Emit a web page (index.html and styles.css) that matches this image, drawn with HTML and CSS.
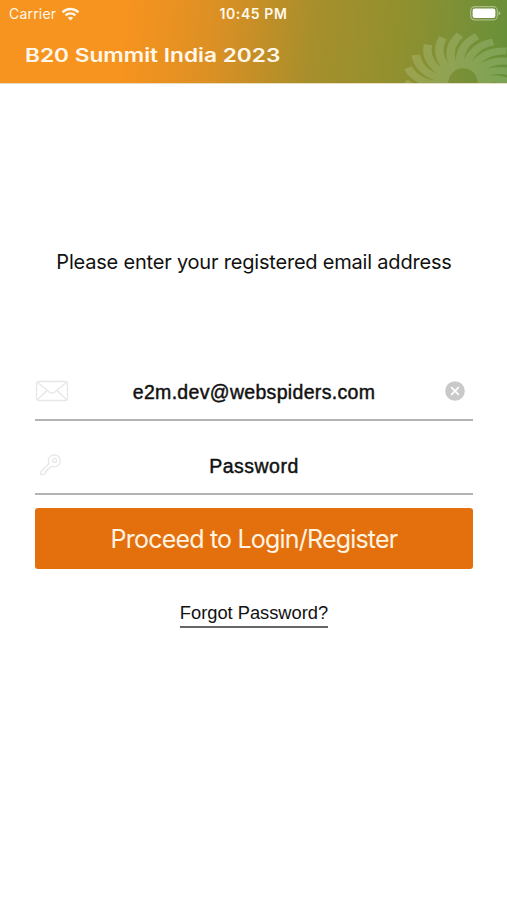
FILE: index.html
```
<!DOCTYPE html>
<html lang="en">
<head>
<meta charset="utf-8">
<title>B20 Summit India 2023</title>
<link rel="stylesheet" href="styles.css">
</head>
<body>
<header class="header">
  <svg class="flower" width="110" height="56" viewBox="0 0 110 56">
    <g id="petals" transform="translate(66 56) scale(1 .83)">
      <ellipse rx="19" ry="22"/>
    </g>
  </svg>
  <div class="status-bar">
    <div class="carrier">
      <span>Carrier</span>
      <svg width="19" height="14" viewBox="0 0 18 14" fill="none" stroke="#fff8ea" stroke-width="2.4">
        <path d="M1 5.3C5.5 .9 12.5 .9 17 5.3"/>
        <path d="M4 8.4C6.8 5.7 11.2 5.7 14 8.4"/>
        <path d="M6.3 10.7C7.9 9.3 10.1 9.3 11.7 10.7L9 13.4Z" fill="#fff8ea" stroke="none"/>
      </svg>
    </div>
    <div class="time">10:45 PM</div>
    <svg class="battery" width="31" height="15" viewBox="0 0 31 15">
      <rect x=".7" y=".7" width="26.6" height="13.2" rx="4" fill="none" stroke="#fff" stroke-opacity=".4" stroke-width="1.2"/>
      <rect x="2.6" y="2.6" width="22.8" height="9.4" rx="2.2" fill="#fff"/>
      <path d="M28.6 5V9.6Q30.2 8.8 30.2 7.3T28.6 5Z" fill="#fff" fill-opacity=".5"/>
    </svg>
  </div>
  <h1 class="title">B20 Summit India 2023</h1>
</header>

<main class="login">
  <p class="hint">Please enter your registered email address</p>

  <div class="field">
    <svg class="icon" width="34" height="22" viewBox="0 0 34 22" fill="none" stroke="#e6e8e8" stroke-width="1.3">
      <rect x="1.5" y="1.5" width="31" height="19" rx="2"/>
      <path d="M2 2L14.5 12.3Q17 14.2 19.5 12.3L32 2M2 20L12 10.5M32 20L22 10.5"/>
    </svg>
    <span class="value email">e2m.dev@webspiders.com</span>
    <svg class="icon clear" width="20" height="20" viewBox="0 0 20 20">
      <circle cx="10" cy="10" r="9.8" fill="#c9c9c9"/>
      <path d="M6.2 6.2L13.8 13.8M13.8 6.2L6.2 13.8" stroke="#fff" stroke-width="1.7"/>
    </svg>
  </div>

  <div class="field">
    <svg class="icon key" width="22" height="22" viewBox="0 0 22 22" fill="none" stroke="#e6e6e6" stroke-width="1.2">
      <path d="M10 9.6A6 6 0 1 1 12.7 12.2L10.7 14.2L9 14.4L8.8 16.4L6.8 16.8L6.6 18.8L5 20.4L1.5 20.7L1.8 17.6Z"/>
      <circle cx="15.6" cy="6.4" r="2"/>
    </svg>
    <span class="value password">Password</span>
  </div>

  <button class="proceed">Proceed to Login/Register</button>
  <a class="forgot">Forgot Password?</a>
</main>

<script>
const petals = document.getElementById("petals");
for (let i = 0; i < 21; i++) {
  const petal = document.createElementNS("http://www.w3.org/2000/svg", "path");
  petal.setAttribute("d", "M-9 -19Q-18 -42 -3 -58");
  petal.setAttribute("transform", `rotate(${i * 360 / 21})`);
  petals.appendChild(petal);
}
</script>
</body>
</html>
```
FILE: styles.css
```
body {
  margin: 0;
  width: 507px;
  height: 900px;
  overflow: hidden;
  background: #fff;
  color: #111;
  font-family: Inter, "Liberation Sans", sans-serif;
}
.header {
  position: relative;
  height: 83px;
  overflow: hidden;
  border-bottom: 1px solid #e9dcc0;
  background: linear-gradient(96deg, #f7931f 0%, #f7931f 25%, #dc9024 42%, #c18f27 52%, #a58f2c 62%, #93902e 77%, #7b9037 90%, #669038 100%);
  color: #fff8ea;
}
.flower {
  position: absolute;
  right: 0;
  bottom: 0;
  opacity: .17;
}
#petals {
  fill: none;
  stroke: #e6ffe0;
  stroke-width: 8.5;
}
.status-bar {
  position: relative;
  display: grid;
  grid-template-columns: 1fr auto 1fr;
  align-items: center;
  height: 27px;
  padding: 0 6px 0 9px;
  font-size: 14px;
}
.carrier {
  display: flex;
  align-items: center;
  gap: 5px;
  letter-spacing: .2px;
}
.time {
  margin-right: 3px;
  font-weight: 600;
  letter-spacing: .6px;
}
.battery {
  justify-self: end;
}
.title {
  position: relative;
  width: max-content;
  margin: 16px 0 0 25px;
  font-size: 18.5px;
  line-height: 24px;
  font-weight: 600;
  transform: scaleX(1.225);
  transform-origin: left;
}
.login {
  display: flex;
  flex-direction: column;
  padding: 0 34px 0 35px;
}
.hint {
  margin: 165px 0 88px;
  line-height: 26px;
  font-size: 20px;
  letter-spacing: -.2px;
  text-align: center;
  white-space: nowrap;
}
.field {
  display: grid;
  grid-template-columns: 34px 1fr 34px;
  align-items: center;
  box-sizing: border-box;
  height: 58px;
  margin-bottom: 16px;
  border-bottom: 2px solid #b4b4b4;
}
.field + .field {
  margin-bottom: 13px;
}
.value {
  padding-top: 2px;
  text-align: center;
  font-family: "Liberation Sans", sans-serif;
  font-size: 19.5px;
  letter-spacing: .32px;
  -webkit-text-stroke: .45px #111;
}
.password {
  letter-spacing: .5px;
}
.clear {
  margin-left: 6px;
}
.key {
  margin-left: 4px;
}
.proceed {
  height: 61px;
  padding: 0;
  border: none;
  border-radius: 3px;
  background: #e4700d;
  color: #fff3e2;
  font-family: inherit;
  font-size: 25px;
  letter-spacing: -.8px;
}
.forgot {
  align-self: center;
  margin-top: 32px;
  padding-bottom: 1px;
  line-height: 24px;
  border-bottom: 2px solid #666;
  font-family: "Liberation Sans", sans-serif;
  font-size: 18.3px;
}
```
